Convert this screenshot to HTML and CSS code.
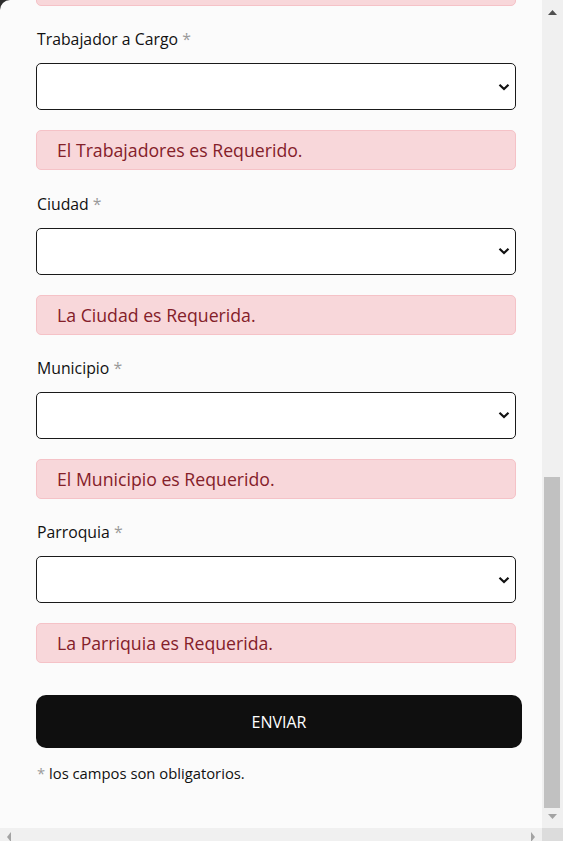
FILE: index.html
```html
<!DOCTYPE html>
<html lang="es">
<head>
<meta charset="utf-8">
<title>Formulario</title>
<link rel="stylesheet" href="styles.css">
</head>
<body>
<div class="window">
  <div class="viewport">
    <div class="panel">
      <form class="form">
        <div class="alert alert-first"></div>

        <div class="group">
          <label class="label">Trabajador a Cargo <span class="req">*</span></label>
          <select class="select"></select>
          <div class="alert">El Trabajadores es Requerido.</div>
        </div>

        <div class="group">
          <label class="label">Ciudad <span class="req">*</span></label>
          <select class="select"></select>
          <div class="alert">La Ciudad es Requerida.</div>
        </div>

        <div class="group">
          <label class="label">Municipio <span class="req">*</span></label>
          <select class="select"></select>
          <div class="alert">El Municipio es Requerido.</div>
        </div>

        <div class="group">
          <label class="label">Parroquia <span class="req">*</span></label>
          <select class="select"></select>
          <div class="alert">La Parriquia es Requerida.</div>
        </div>

        <button type="button" class="btn">ENVIAR</button>
        <p class="note"><span class="req">*</span> los campos son obligatorios.</p>
      </form>
    </div>
  </div>
  <div class="vscroll">
    <svg class="arrow" width="21" height="17" viewBox="0 0 21 17"><path d="M6 15 L10.5 10 L15 15 Z" fill="#505050"/></svg>
    <div class="vtrack"><div class="vthumb"></div></div>
    <svg class="arrow" width="21" height="17" viewBox="0 0 21 17"><path d="M6 3 L10.5 8 L15 3 Z" fill="#a3a3a3"/></svg>
  </div>
  <div class="hscroll">
    <svg class="harrow" width="17" height="13" viewBox="0 0 17 13"><path d="M11 4 L7 9 L11 14 Z" fill="#a3a3a3"/></svg>
    <svg class="harrow" width="17" height="13" viewBox="0 0 17 13"><path d="M6 4 L10 9 L6 14 Z" fill="#a3a3a3"/></svg>
  </div>
  <div class="corner"></div>
</div>
</body>
</html>
```
FILE: styles.css
```css
* { box-sizing: border-box; }
html, body { margin: 0; padding: 0; }
body {
  width: 563px;
  height: 841px;
  overflow: hidden;
  background: #2d2d2d;
  font-family: "Open Sans", "Noto Sans", sans-serif;
}
.window {
  display: grid;
  grid-template-columns: 542px 21px;
  grid-template-rows: 828px 13px;
  width: 563px;
  height: 841px;
}
.viewport {
  overflow: hidden;
  background: #2d2d2d;
}
.panel {
  height: 100%;
  background: #fbfbfb;
  border-top-left-radius: 10px;
  overflow: hidden;
  padding: 0 0 0 36px;
}
.form {
  display: flex;
  flex-direction: column;
  width: 486px;
}
.alert {
  width: 480px;
  height: 40px;
  margin-top: 20px;
  padding: 0 20px;
  display: flex;
  align-items: center;
  background: #f8d7da;
  border: 1px solid #f5c2c7;
  border-radius: 5px;
  color: #842029;
  font-size: 17.7px;
}
.alert-first {
  margin-top: -34px;
}
.group {
  display: flex;
  flex-direction: column;
  margin-top: 21.33px;
}
.label {
  font-size: 15.8px;
  line-height: 24px;
  color: #111;
  padding-left: 1px;
  margin-bottom: 12px;
}
.req {
  color: #9a9a9a;
}
.select {
  appearance: none;
  -webkit-appearance: none;
  width: 480px;
  height: 47px;
  border: 1px solid #1a1a1a;
  border-radius: 5px;
  background-color: #fff;
  background-image: url("data:image/svg+xml,%3Csvg xmlns='http://www.w3.org/2000/svg' width='12' height='8' viewBox='0 0 12 8'%3E%3Cpath d='M1.5 1.8 L6 6 L10.5 1.8' fill='none' stroke='%23111' stroke-width='2.2'/%3E%3C/svg%3E");
  background-repeat: no-repeat;
  background-position: right 5px center;
  margin: 0;
}
.btn {
  margin-top: 32px;
  width: 486px;
  height: 53px;
  border: none;
  border-radius: 10px;
  background: #0f0f0f;
  color: #fff;
  font-family: inherit;
  font-size: 16px;
  cursor: pointer;
}
.note {
  margin: 15px 0 0 1px;
  font-size: 14.8px;
  line-height: 20px;
  color: #111;
}
.vscroll {
  background: #f0f0f0;
  display: flex;
  flex-direction: column;
}
.arrow { display: block; flex: none; }
.vtrack {
  flex: 1;
  display: flex;
  flex-direction: column;
  justify-content: flex-end;
  padding: 0 3px 3px 2px;
}
.vthumb {
  height: 331px;
  background: #c1c1c1;
}
.hscroll {
  background: #f0f0f0;
  display: flex;
  justify-content: space-between;
  overflow: hidden;
}
.harrow { display: block; }
.corner {
  background: #dcdcdc;
}
```
